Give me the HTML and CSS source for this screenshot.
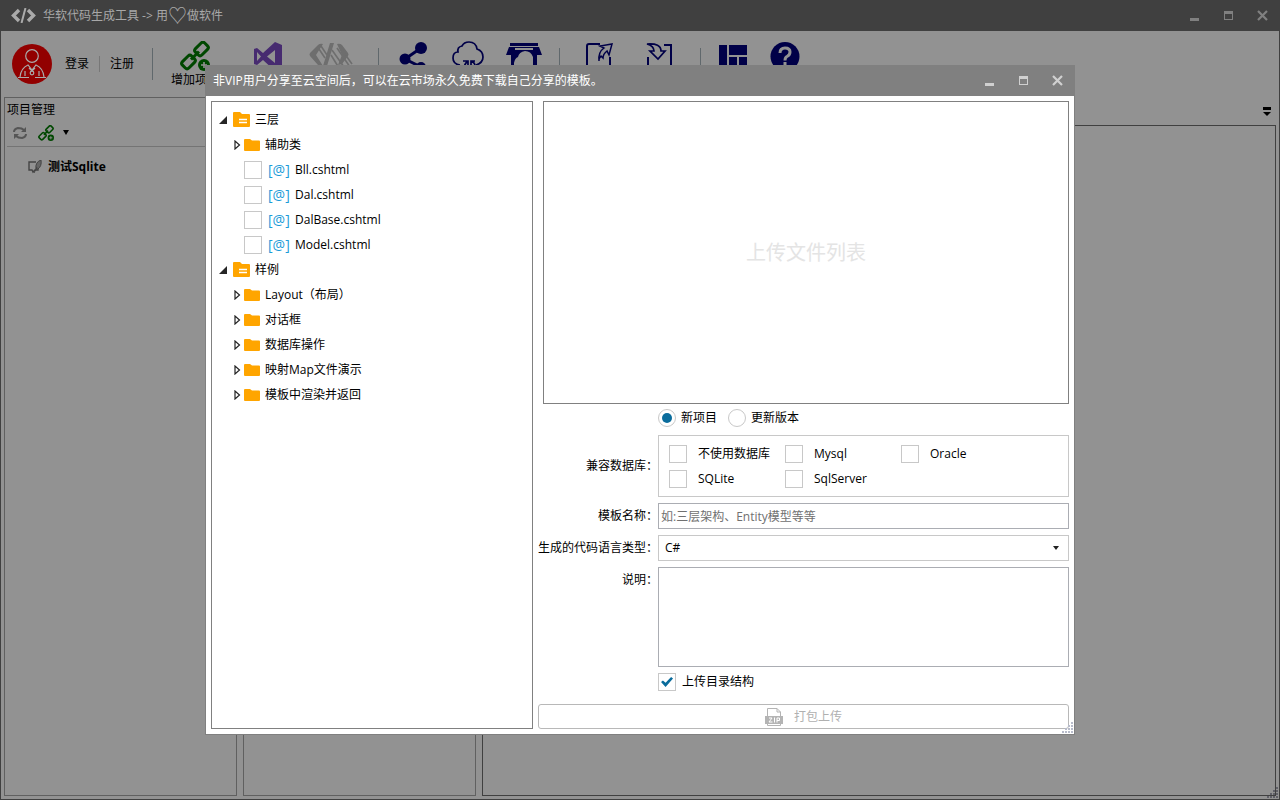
FILE: index.html
```html
<!DOCTYPE html>
<html lang="zh-CN">
<head>
<meta charset="utf-8">
<title>华软代码生成工具</title>
<link rel="stylesheet" href="styles.css">
</head>
<body>
<svg class="defs" aria-hidden="true">
  <symbol id="i-links" viewBox="0 0 30 30">
    <g fill="none" stroke="currentColor" stroke-width="3">
      <rect x="-6.500" y="-4.500" width="13" height="9" rx="2.500" transform="translate(21.500 8) rotate(-45)"/>
      <rect x="-6.500" y="-4.500" width="13" height="9" rx="2.500" transform="translate(8.500 21) rotate(-45)"/>
      <path d="M11 18.500l8-8"/>
    </g>
    <circle cx="24" cy="24" r="6" fill="currentColor"/>
    <path d="M24 21v6M21 24h6" stroke="#929292" stroke-width="1.600"/>
  </symbol>
  <symbol id="i-min" viewBox="0 0 11 11"><path d="M1 8h9v3H1z" fill="currentColor"/></symbol>
  <symbol id="i-max" viewBox="0 0 11 11"><path d="M1 1h9v9H1zM2 4v5h7V4z" fill="currentColor" fill-rule="evenodd"/></symbol>
  <symbol id="i-close" viewBox="0 0 11 11"><path d="M1 1l9 9M10 1l-9 9" stroke="currentColor" stroke-width="2.200"/></symbol>
  <symbol id="i-open" viewBox="0 0 8 8"><path d="M8 0v8H0z" fill="#262626"/></symbol>
  <symbol id="i-closed" viewBox="0 0 7 10"><path d="M1 1v8l4.500-4z" fill="#fff" stroke="#222" stroke-width="1.200"/></symbol>
  <symbol id="i-folder" viewBox="0 0 16 12"><path d="M1 0h5l2 1.500h7q1 0 1 1V11q0 1-1 1H1q-1 0-1-1V1q0-1 1-1z" fill="#ffa500"/></symbol>
  <symbol id="i-folder-list" viewBox="0 0 17 15"><path d="M1 0h6l2 2h7q1 0 1 1v11q0 1-1 1H1q-1 0-1-1V1q0-1 1-1z" fill="#ffa500"/><path d="M6 7.500h8M6 10.500h8" stroke="#fff" stroke-width="1.500"/></symbol>
  <symbol id="i-grip" viewBox="0 0 12 12"><path d="M9 0h2v2H9zM6 3h2v2H6zM9 3h2v2H9zM3 6h2v2H3zM6 6h2v2H6zM9 6h2v2H9zM0 9h2v2H0zM3 9h2v2H3zM6 9h2v2H6zM9 9h2v2H9z" fill="currentColor"/></symbol>
</svg>

<div class="app">
  <header class="app-title">
    <svg class="logo" viewBox="0 0 25 15"><path d="M8 2L2.500 7.500 8 13M17 2l5.500 5.500L17 13" fill="none" stroke="#aaa" stroke-width="3.400"/><path d="M14.500 0l-4 15" stroke="#aaa" stroke-width="2"/></svg>
    <span class="app-name">华软代码生成工具 -&gt; 用<span class="heart">♡</span>做软件</span>
    <div class="win-buttons">
      <button aria-label="最小化"><svg><use href="#i-min"/></svg></button>
      <button aria-label="最大化"><svg><use href="#i-max"/></svg></button>
      <button aria-label="关闭"><svg><use href="#i-close"/></svg></button>
    </div>
  </header>

  <nav class="toolbar">
    <svg class="avatar" viewBox="0 0 40 40"><circle cx="20" cy="20" r="20" fill="#920000"/><g fill="none" stroke="#aaa" stroke-width="1.200"><circle cx="20" cy="12" r="6.300"/><path d="M8 33q1-9 8-12l4 5 4-5q7 3 8 12M13 32v-5M27 32v-5M6 33.500h11M23 33.500h11M17 24l3 3 3-3"/><circle cx="20" cy="29" r="1.800"/></g></svg>
    <div class="account"><a href="#login">登录</a><a href="#register">注册</a></div>
    <div class="tools tools-project">
      <button class="tool tool-add"><svg class="green" viewBox="0 0 30 30"><use href="#i-links"/></svg><span>增加项目</span></button>
      <button class="tool" aria-label="Visual Studio"><svg viewBox="0 0 30 30"><path d="M1 8l3-1 6 5L22 1l7 3v23l-7 3L10 19l-6 5-3-1zM4 11v9l4-4.500zM22 9l-8 6.500 8 6.500z" fill="#472b70" fill-rule="evenodd"/></svg></button>
      <button class="tool" aria-label="代码"><svg class="wide" viewBox="0 0 44 30"><path d="M14 3q-3-1-5 1L1 12q-1 1.500 0 3l8 9 5 1-7-11zM25 2h-4l-7 23h4zM28 3q3-1 5 1l6 8q1 1.500 0 3l-6 8-4 1 4-10z" fill="#6e6e6e"/><path d="M23 9l12 17M22 14l8 13M28 7l13 19M33 9l10 14M12 5l6 9M10 8l6 9" fill="none" stroke="#6e6e6e" stroke-width="1.600"/></svg></button>
    </div>
    <div class="tools tools-cloud">
      <button class="tool" aria-label="分享"><svg viewBox="0 0 30 30"><path d="M22 7L6 18l16 8" fill="none" stroke="#000048" stroke-width="3"/><circle cx="22" cy="7" r="6" fill="#000048"/><circle cx="6" cy="18" r="5.500" fill="#000048"/><circle cx="22" cy="26" r="5" fill="#000048"/></svg></button>
      <button class="tool" aria-label="云空间"><svg class="wide" viewBox="0 0 44 30"><path d="M13 24q-7-1-7-7 0-6 5-6-1-5 4-6 2-4 7-4 7 0 8 7 6 2 6 8 0 6-7 8" fill="none" stroke="#000048" stroke-width="1.700"/><path d="M16 20h5v5M21 20q-4 3-4 8M28 27q1-4-3-7M24 25v-5h4" fill="none" stroke="#000048" stroke-width="1.700"/></svg></button>
      <button class="tool" aria-label="云市场"><svg class="wide" viewBox="0 0 44 30"><path d="M8 2h28v3H8zM7 6h30l3 8h-5v16h-4V16q-2-6-8-6-6 1-7 6-3 1-4 6v8H9V14H4zM13 7v2h18V7z" fill="#000048" fill-rule="evenodd"/><path d="M14 22q0-5 4-5 1-5 6-4 4 1 4 6 3 1 3 6l-4 3H16q-3-2-2-6z" fill="#929292"/></svg></button>
    </div>
    <div class="tools tools-transfer">
      <button class="tool" aria-label="导出"><svg viewBox="0 0 30 30"><path d="M16 3H5q-2 0-2 2v25M26 16v14" fill="none" stroke="#000048" stroke-width="2"/><path d="M15 20q-1-9 5-13l-4-2 12-2-3 11-2-4q-4 3-4 7l-2-2q-2 2-2 5z" fill="none" stroke="#000048" stroke-width="1.500"/></svg></button>
      <button class="tool" aria-label="导入"><svg viewBox="0 0 30 30"><path d="M19 4h7v26M3 16v14" fill="none" stroke="#000048" stroke-width="2"/><path d="M2 3q14-1 14 7h4l-7 8-8-8h4Q9 5 2 3z" fill="none" stroke="#000048" stroke-width="1.700"/></svg></button>
    </div>
    <div class="tools tools-view">
      <button class="tool" aria-label="布局"><svg viewBox="0 0 30 30"><path d="M1 4h8v26H1zM11 4h18v10H11zM11 16h8v14h-8zM21 16h8v14h-8z" fill="#000048"/></svg></button>
      <button class="tool" aria-label="帮助"><svg viewBox="0 0 30 30"><circle cx="15" cy="15.500" r="14.500" fill="#000048"/><path d="M10 12q0-5 5-5t5 4q0 3-3 4.500-2 1-2 4M15 21v3.500" fill="none" stroke="#929292" stroke-width="3"/></svg></button>
    </div>
  </nav>

  <div class="workspace">
    <aside class="panel">
      <h2>项目管理</h2>
      <div class="panel-bar">
        <button aria-label="刷新"><svg width="14" height="14" viewBox="0 0 14 14"><path d="M1 6q0-3 4-4 4 0 6 2M13 8q0 3-4 4-4 0-6-2" fill="none" stroke="#555" stroke-width="2"/><path d="M13 1v5H8zM1 13V8h5z" fill="#555"/></svg></button>
        <button aria-label="增加项目"><svg class="green" width="16" height="16" viewBox="0 0 30 30"><use href="#i-links"/></svg></button>
        <button aria-label="更多"><svg width="6" height="5" viewBox="0 0 6 5"><path d="M0 0h6L3 5z"/></svg></button>
      </div>
      <div class="project">
        <svg width="14" height="14" viewBox="0 0 14 14"><path d="M8 2H1v8h3l1 2 2-2h3V8" fill="none" stroke="#444" stroke-width="1.400"/><path d="M13 0q1 6-3 9H8Q7 2 13 0zM9 7l-3 6" fill="#666" stroke="#444"/></svg>
        <span>测试Sqlite</span>
      </div>
    </aside>
    <section class="panel"></section>
    <main class="editor">
      <div class="tabs"><button aria-label="标签列表"><svg width="8" height="9" viewBox="0 0 8 9"><path d="M0 0h8v3H0zM0 5h8L4 9z"/></svg></button></div>
      <div class="document"></div>
    </main>
  </div>
  <svg class="grip"><use href="#i-grip"/></svg>
</div>

<div class="overlay">
  <section class="dialog" role="dialog" aria-labelledby="dialog-title">
    <header class="dialog-title">
      <h1 id="dialog-title">非VIP用户分享至云空间后，可以在云市场永久免费下载自己分享的模板。</h1>
      <div class="win-buttons">
        <button aria-label="最小化"><svg><use href="#i-min"/></svg></button>
        <button aria-label="最大化"><svg><use href="#i-max"/></svg></button>
        <button aria-label="关闭"><svg><use href="#i-close"/></svg></button>
      </div>
    </header>
    <div class="dialog-body">
      <ul class="tree">
        <li>
          <div class="node"><svg class="open"><use href="#i-open"/></svg><svg class="folder-list"><use href="#i-folder-list"/></svg>三层</div>
          <ul>
            <li class="node"><svg class="closed"><use href="#i-closed"/></svg><svg class="folder"><use href="#i-folder"/></svg>辅助类</li>
            <li><label class="file"><input type="checkbox"><span class="at">[@]</span>Bll.cshtml</label></li>
            <li><label class="file"><input type="checkbox"><span class="at">[@]</span>Dal.cshtml</label></li>
            <li><label class="file"><input type="checkbox"><span class="at">[@]</span>DalBase.cshtml</label></li>
            <li><label class="file"><input type="checkbox"><span class="at">[@]</span>Model.cshtml</label></li>
          </ul>
        </li>
        <li>
          <div class="node"><svg class="open"><use href="#i-open"/></svg><svg class="folder-list"><use href="#i-folder-list"/></svg>样例</div>
          <ul>
            <li class="node"><svg class="closed"><use href="#i-closed"/></svg><svg class="folder"><use href="#i-folder"/></svg>Layout（布局）</li>
            <li class="node"><svg class="closed"><use href="#i-closed"/></svg><svg class="folder"><use href="#i-folder"/></svg>对话框</li>
            <li class="node"><svg class="closed"><use href="#i-closed"/></svg><svg class="folder"><use href="#i-folder"/></svg>数据库操作</li>
            <li class="node"><svg class="closed"><use href="#i-closed"/></svg><svg class="folder"><use href="#i-folder"/></svg>映射Map文件演示</li>
            <li class="node"><svg class="closed"><use href="#i-closed"/></svg><svg class="folder"><use href="#i-folder"/></svg>模板中渲染并返回</li>
          </ul>
        </li>
      </ul>

      <form class="upload">
        <div class="upload-list">上传文件列表</div>
        <div class="fields">
          <div class="modes">
            <label><input type="radio" name="mode" checked>新项目</label>
            <label><input type="radio" name="mode">更新版本</label>
          </div>
          <span class="caption" id="db-label">兼容数据库：</span>
          <div class="databases" role="group" aria-labelledby="db-label">
            <label><input type="checkbox">不使用数据库</label>
            <label><input type="checkbox">Mysql</label>
            <label><input type="checkbox">Oracle</label>
            <label><input type="checkbox">SQLite</label>
            <label><input type="checkbox">SqlServer</label>
          </div>
          <label class="caption" for="name">模板名称：</label>
          <input class="box" id="name" type="text" placeholder="如:三层架构、Entity模型等等">
          <label class="caption" for="lang">生成的代码语言类型：</label>
          <div class="select">
            <select class="box" id="lang"><option>C#</option></select>
            <svg width="6" height="4" viewBox="0 0 6 4"><path d="M0 0h6L3 4z" fill="#222"/></svg>
          </div>
          <label class="caption top" for="note">说明：</label>
          <textarea class="box" id="note"></textarea>
          <label class="structure"><input type="checkbox" checked>上传目录结构</label>
        </div>
        <button class="submit" type="button" disabled>
          <svg width="18" height="18" viewBox="0 0 18 18"><path d="M2.500 8V.5H12l3.500 3.500v4M12 .5V4h3.500M2.500 14v3.500h13V14" fill="none" stroke="#b4b4b4"/><path d="M0 8h18v8H0z" fill="#b4b4b4"/><path d="M4 10h3l-3 4h3.500M9.500 9.500v5M12 14.500V10h2.500v2.500H12" fill="none" stroke="#fff"/></svg>
          打包上传
        </button>
      </form>
    </div>
    <svg class="grip"><use href="#i-grip"/></svg>
  </section>
</div>
</body>
</html>
```

FILE: styles.css
```css
* { box-sizing: border-box; }
html, body { height: 100%; }
body {
  margin: 0;
  font: 12px/18px "Open Sans", "Noto Sans CJK SC", sans-serif;
  color: #000;
}
ul { margin: 0; padding: 0; list-style: none; }
h1, h2 { margin: 0; font-size: 12px; font-weight: 400; }
button, input, select, textarea { font: inherit; color: inherit; margin: 0; }
button { background: none; border: 0; padding: 0; }
a { color: inherit; text-decoration: none; }
svg { display: block; flex: none; }
.defs { display: none; }

/* Main window */
.app {
  position: relative;
  display: flex;
  flex-direction: column;
  min-height: 100%;
  background: #929292;
  border: 1px solid #404040;
  border-top: 0;
}
.app-title {
  display: flex;
  align-items: center;
  height: 31px;
  padding-left: 10px;
  background: #404040;
  color: #a8a8a8;
}
.logo { width: 25px; height: 15px; }
.app-name { display: flex; align-items: center; margin-left: 7px; white-space: pre; }
.heart { font-size: 19px; }
.win-buttons {
  display: flex;
  gap: 23px;
  margin-left: auto;
  padding-right: 11px;
  color: #808080;
}
.win-buttons svg { width: 11px; height: 11px; }

.toolbar {
  display: flex;
  height: 66px;
  padding: 10px 11px 0;
}
.avatar { width: 40px; height: 40px; margin-top: 3px; }
.account { display: flex; align-items: center; height: 46px; padding: 0 18px 0 13px; }
.account a + a { margin-left: 10px; padding-left: 10px; border-left: 1px solid #777; line-height: 16px; }
.tools { position: relative; display: flex; }
.tools::before {
  content: "";
  width: 1px;
  height: 32px;
  margin-top: 7px;
  background: #60686c;
}
.tool { display: flex; flex-direction: column; align-items: center; }
.tool svg { width: 30px; height: 30px; }
.tool svg.wide { width: 44px; }
.tools-project .tool { width: 46px; }
.tools-project .tool:nth-child(2) { width: 80px; }
.tools-project .tool-add { width: 66px; margin-left: 9px; }
.tools-project { padding-right: 24px; }
.tools-cloud .tool { width: 55px; }
.tools-cloud .tool:first-of-type { margin-left: 7px; }
.tools-cloud { padding-right: 8px; }
.tools-transfer .tool { width: 61px; }
.tools-transfer .tool:first-of-type { margin-left: 8px; }
.tools-transfer { padding-right: 10px; }
.tools-view .tool { width: 52px; }
.tools-view .tool:first-of-type { margin-left: 6px; }
.green { color: #004800; }

.workspace {
  flex: 1;
  display: grid;
  grid-template-columns: 233px 233px 1fr;
  gap: 6px;
  padding: 0 3px 3px;
}
.panel { border: 1px solid #606060; padding: 3px 2px 2px; }
.panel-bar {
  display: flex;
  align-items: center;
  gap: 11px;
  height: 28px;
  padding-left: 6px;
  border-bottom: 1px solid #747474;
}
.panel-bar button:last-child { margin-left: -2px; }
.project {
  display: flex;
  align-items: center;
  gap: 6px;
  height: 40px;
  padding-left: 21px;
  font-weight: 700;
}
.editor { display: flex; flex-direction: column; }
.tabs { display: flex; justify-content: flex-end; align-items: center; height: 28px; padding-right: 5px; }
.document { flex: 1; border: 1px solid #404040; }
.grip { position: absolute; right: 0; bottom: 0; width: 12px; height: 12px; color: #606068; }

/* Dialog */
.overlay { position: absolute; inset: 0; display: flex; padding: 65px 205px; }
.dialog {
  position: relative;
  flex: 1;
  display: flex;
  flex-direction: column;
  min-width: 720px;
  background: #fff;
  border: 1px solid #808080;
  border-top: 0;
}
.dialog-title {
  display: flex;
  align-items: center;
  height: 31px;
  padding-left: 7px;
  background: #808080;
  color: #fff;
}
.dialog-title .win-buttons { color: #d0d0d0; }
.dialog .grip { color: #b8bccb; }
.dialog-body { flex: 1; display: flex; gap: 5px; padding: 5px; }

.tree { width: 322px; padding: 5px 7px; border: 1px solid #808080; }
.tree ul { padding-left: 15px; }
.node, .file { display: flex; align-items: center; height: 25px; }
.open { width: 8px; height: 8px; margin-right: 6px; }
.folder-list { width: 17px; height: 15px; margin-right: 5px; }
.closed { width: 7px; height: 10px; margin-right: 3px; }
.folder { width: 16px; height: 12px; margin-right: 5px; }
.file { padding-left: 10px; }
.at { width: 27px; margin-left: 6px; color: #1c9bd8; font-size: 14px; }

input[type="checkbox"], input[type="radio"] {
  appearance: none;
  flex: none;
  display: grid;
  place-items: center;
  width: 18px;
  height: 18px;
  border: 1px solid #c8c8c8;
  background: #fff;
}
input[type="radio"] { border-radius: 50%; }
input[type="radio"]:checked::before {
  content: "";
  width: 10px;
  height: 10px;
  border-radius: 50%;
  background: #0a6c9c;
}
input[type="checkbox"]:checked::before {
  content: "";
  width: 12px;
  height: 10px;
  background: #0a6c9c;
  clip-path: polygon(0 50%, 16% 34%, 38% 58%, 84% 0, 100% 16%, 38% 100%);
}

.upload { flex: 1; display: flex; flex-direction: column; }
.upload-list {
  flex: 1;
  display: grid;
  place-items: center;
  margin: 0 0 5px 5px;
  border: 1px solid #808080;
  color: #e4e4e4;
  font-size: 20px;
}
.fields {
  display: grid;
  grid-template-columns: auto 1fr;
  row-gap: 6px;
  align-items: center;
  padding-bottom: 13px;
}
.caption { text-align: right; }
.caption.top { align-self: start; padding-top: 4px; }
.modes { grid-column: 2; display: flex; gap: 11px; height: 20px; }
.modes label, .structure { display: flex; gap: 5px; height: 18px; }
.structure { grid-column: 2; gap: 6px; }
.databases {
  display: grid;
  grid-template-columns: repeat(3, 116px);
  padding: 5px 10px;
  border: 1px solid #c8c8c8;
}
.databases label { display: flex; align-items: center; gap: 11px; height: 25px; }
.box {
  width: 100%;
  height: 26px;
  padding: 0 2px;
  border: 1px solid #abadb3;
  border-radius: 0;
  background: #fff;
}
.box::placeholder { color: #707070; }
textarea.box { display: block; height: 100px; resize: none; }
.select { position: relative; }
.select svg { position: absolute; right: 10px; top: 11px; }
select.box { display: block; appearance: none; padding-left: 6px; border-color: #c8c8c8; }
.submit {
  display: flex;
  align-items: center;
  justify-content: center;
  gap: 11px;
  height: 25px;
  border: 1px solid #b8b8b8;
  border-radius: 3px;
  color: #b0b0b0;
}
```
